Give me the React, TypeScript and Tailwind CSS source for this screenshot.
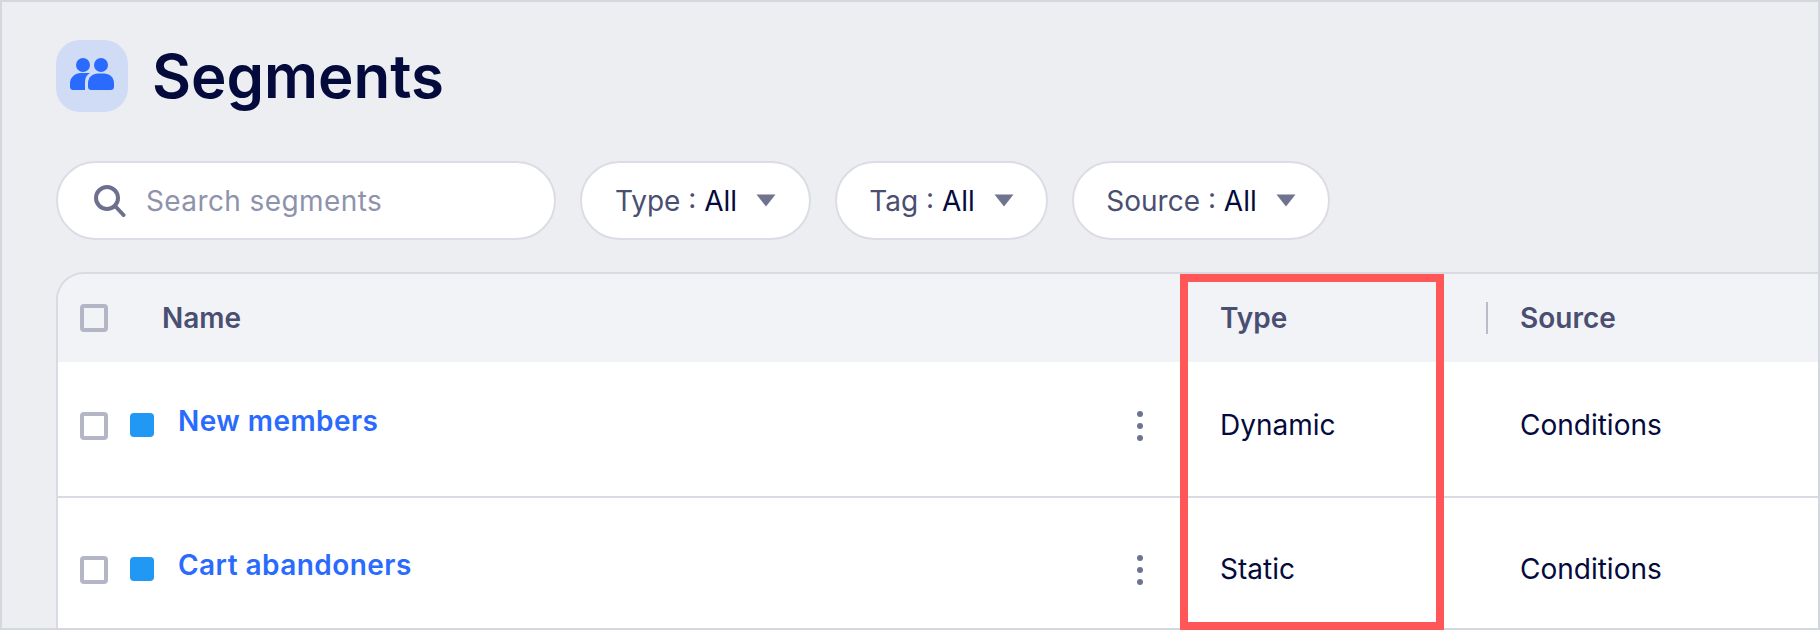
function SegmentsIcon() {
  return (
    <svg width="72" height="72" viewBox="0 0 72 72" fill="#2a6bfd">
      <circle cx="27" cy="25" r="7" />
      <circle cx="45" cy="25" r="7" />
      {/* left body is cut by the right one */}
      <path d="M14 47v-3.500c0-6 5-10.500 11-10.500h9c-3 1.500-5 5-5 9v8h-12c-1.500 0-3-1-3-3z" />
      <path d="M32 47v-4c0-5.500 4.500-9.500 10-9.500h6c5.500 0 10 4 10 9.500v4c0 2-1.500 3-3 3h-20c-1.500 0-3-1-3-3z" />
    </svg>
  );
}

function SearchIcon() {
  return (
    <svg width="32" height="32" viewBox="0 0 32 32" fill="none" stroke="#6c708e" strokeWidth="4" strokeLinecap="round">
      <circle cx="13" cy="13" r="11" />
      <path d="M21.500 21.500 29.500 30" />
    </svg>
  );
}

function Filter({ label, width }: { label: string; width: string }) {
  return (
    <div className={`flex h-[79px] ${width} items-center justify-center gap-[19px] rounded-full border-2 border-[#dcdde4] bg-white`}>
      <span className="text-[28px] text-[#4a4f72]">
        {label} : <span className="text-[#040a3c]">All</span>
      </span>
      <svg width="20" height="13" viewBox="0 0 20 13" fill="#6f7390">
        <path d="M0.500 0.500h19l-9.500 12z" />
      </svg>
    </div>
  );
}

function Checkbox() {
  return <div className="h-[28px] w-[28px] shrink-0 rounded-[4px] border-4 border-[#b4b5c5]" />;
}

function Row({ name, type, box }: { name: string; type: string; box: string }) {
  return (
    <div className={`flex items-start bg-white pl-[22px] ${box}`}>
      <Checkbox />
      <div className="ml-[22px] mt-[1px] h-[24px] w-[24px] shrink-0 rounded-[4px] bg-[#2198f4]" />
      <a className="ml-[24px] -mt-[7px] w-[959px] text-[28px] leading-[32px] font-semibold tracking-[0.45px] text-[#2a6bfd]">{name}</a>
      <div className="-mt-[1px] flex w-[6px] flex-col gap-[6px]">
        <div className="h-[6px] w-[6px] rounded-full bg-[#6f7390]" />
        <div className="h-[6px] w-[6px] rounded-full bg-[#6f7390]" />
        <div className="h-[6px] w-[6px] rounded-full bg-[#6f7390]" />
      </div>
      <div className="ml-[77px] -mt-[3px] w-[300px] text-[28px] leading-[32px] text-[#040a3c]">{type}</div>
      <div className="-mt-[3px] text-[28px] leading-[32px] text-[#040a3c]">Conditions</div>
    </div>
  );
}

export default function App() {
  return (
    <div className="relative h-[630px] w-[1820px] overflow-hidden font-['Inter',sans-serif]">
      <div className="flex h-full flex-col border-2 border-[#d5d7de] bg-[#eceef2] pl-[54px] pt-[38px]">
        <div className="flex items-center gap-[24px]">
          <div className="flex h-[72px] w-[72px] items-center justify-center rounded-[24px] bg-[#d0dcf6]">
            <SegmentsIcon />
          </div>
          <h1 className="text-[60px] leading-[72px] font-semibold text-[#040a3c]">Segments</h1>
        </div>

        <div className="mt-[49px] flex gap-[24px]">
          <div className="flex h-[79px] w-[500px] items-center gap-[20px] rounded-full border-2 border-[#dcdde4] bg-white pl-[36px]">
            <SearchIcon />
            <span className="text-[28px] tracking-[0.4px] text-[#8e93ad]">Search segments</span>
          </div>
          <Filter label="Type" width="w-[231px]" />
          <Filter label="Tag" width="w-[213px]" />
          <Filter label="Source" width="w-[258px]" />
        </div>

        <div className="mt-[32px] flex flex-1 flex-col overflow-hidden rounded-tl-[28px] border-l-2 border-t-2 border-[#d9dae2]">
          <div className="flex h-[88px] shrink-0 items-center bg-[#f2f3f6] pl-[22px] text-[28px] font-semibold text-[#4a4f72]">
            <Checkbox />
            <span className="ml-[54px] w-[1058px]">Name</span>
            <span className="w-[266px]">Type</span>
            <div className="h-[32px] w-[2px] bg-[#b9bbc9]" />
            <span className="ml-[32px]">Source</span>
          </div>
          <Row name="New members" type="Dynamic" box="h-[136px] shrink-0 border-b-2 border-[#d9dae2] pt-[50px]" />
          <Row name="Cart abandoners" type="Static" box="flex-1 pt-[58px]" />
        </div>
      </div>

      {/* highlight around the Type column */}
      <div className="absolute left-[1180px] top-[274px] h-[356px] w-[264px] border-8 border-[#ff5757]" />
    </div>
  );
}
